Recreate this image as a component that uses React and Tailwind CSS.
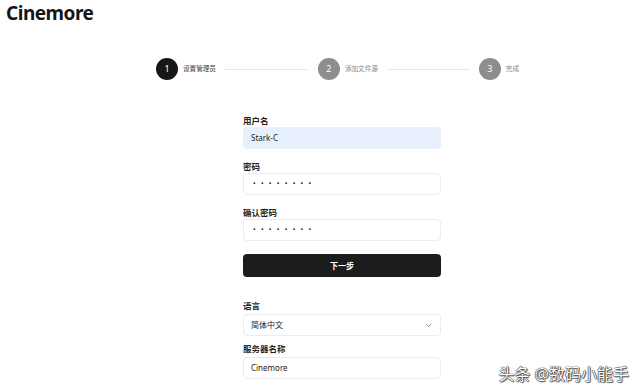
import React from 'react';

const cjk = { fontFamily: '"Noto Sans", "Noto Sans CJK SC", sans-serif' };

const Step = ({ n, label, active }) => (
  <div className="flex items-center gap-[5px] shrink-0">
    <div
      className={`w-[22px] h-[22px] rounded-full flex items-center justify-center text-[9px] text-white ${
        active ? 'bg-[#161616]' : 'bg-[#8d8d8d]'
      }`}
    >
      {n}
    </div>
    <span className={`text-[6.6px] ${active ? 'text-[#3a3a3a]' : 'text-[#888]'}`}>{label}</span>
  </div>
);

const Field = ({ label, children, className = '' }) => (
  <div className={className}>
    <div className="text-[8.5px] leading-[10px] font-bold text-[#1f1f1f] mb-[1px]">{label}</div>
    {children}
  </div>
);

const Box = ({ children, filled }) => (
  <div
    className={`h-[22px] rounded-[4px] border flex items-center px-[7px] text-[8px] text-[#222] ${
      filled ? 'bg-[#e8f0fe] border-[#e8f0fe]' : 'bg-white border-[#ececec]'
    }`}
  >
    {children}
  </div>
);

const Dots = () => (
  <span className="tracking-[5.3px] text-[7px] pl-[2px] text-[#222]">••••••••</span>
);

export default function App() {
  return (
    <div className="relative w-[640px] h-[392px] bg-white overflow-hidden" style={cjk}>
      <div className="pl-[6px] text-[19px] leading-[26px] font-bold text-[#151515] tracking-[-0.5px]">
        Cinemore
      </div>

      {/* Stepper */}
      <div className="mt-[32px] ml-[156px] w-[363px] flex items-center">
        <Step n="1" label="设置管理员" active />
        <div className="flex-1 h-px bg-[#e6e6e6] ml-[9px] mr-[10px]" />
        <Step n="2" label="添加文件源" />
        <div className="flex-1 h-px bg-[#e6e6e6] ml-[9px] mr-[9px]" />
        <Step n="3" label="完成" />
      </div>

      {/* Form */}
      <div className="ml-[243px] w-[198px] mt-[36px]">
        <Field label="用户名">
          <Box filled>Stark-C</Box>
        </Field>
        <Field label="密码" className="mt-[13px]">
          <Box><Dots /></Box>
        </Field>
        <Field label="确认密码" className="mt-[13px]">
          <Box><Dots /></Box>
        </Field>
        <button className="mt-[13px] w-full h-[23px] rounded-[4px] bg-[#1c1c1c] text-white text-[8px] font-bold">
          下一步
        </button>

        <div className="mt-[24px]">
          <div className="text-[8.5px] leading-[10px] font-bold text-[#1f1f1f] mb-[3px]">语言</div>
          <div className="h-[22px] rounded-[4px] border border-[#ececec] flex items-center justify-between px-[7px] text-[8px] text-[#222]">
            <span>简体中文</span>
            <svg width="7" height="5" viewBox="0 0 7 5" fill="none" className="mr-[1px]">
              <path d="M1 1.2 3.5 3.6 6 1.2" stroke="#8a8a8a" strokeWidth="1" strokeLinecap="round" strokeLinejoin="round" />
            </svg>
          </div>
          <div className="mt-[8px] text-[8.5px] leading-[10px] font-bold text-[#1f1f1f] mb-[3px]">服务器名称</div>
          <Box>Cinemore</Box>
        </div>
      </div>

      {/* Watermark */}
      <div
        className="absolute right-[11px] bottom-[8px] text-[16px] leading-[20px] text-white"
        style={{ textShadow: '0 0 1px #000, 0 0 1px #000, 1px 1px 1px rgba(0,0,0,0.6)' }}
      >
        头条 @数码小能手
      </div>
    </div>
  );
}
